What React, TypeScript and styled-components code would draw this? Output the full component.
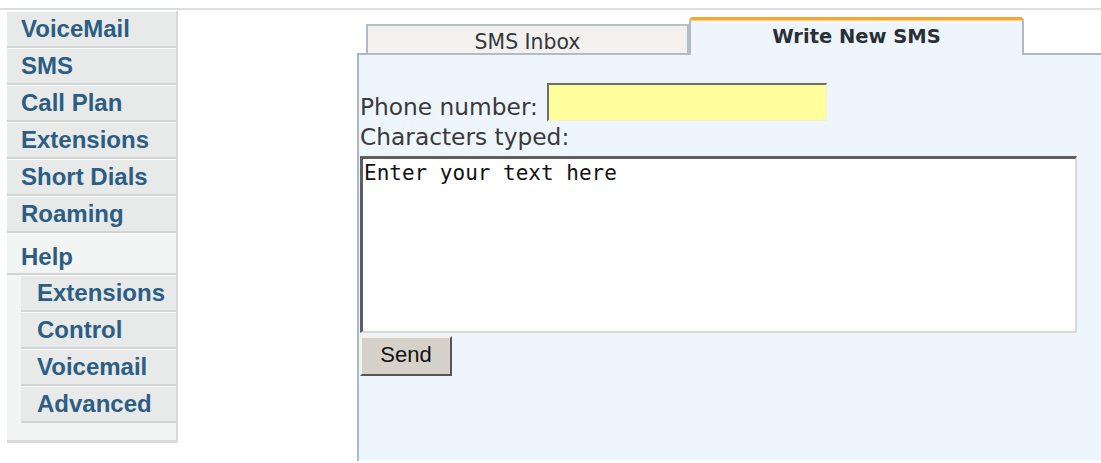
import React from "react";
import styled, { createGlobalStyle } from "styled-components";

const Global = createGlobalStyle`
  html, body { margin: 0; padding: 0; background: #ffffff; }
  body { font-family: "DejaVu Sans", Verdana, sans-serif; }
`;

const Page = styled.div`
  margin-top: 8px;
  border-top: 2px solid #dcdedf;
  display: grid;
  grid-template-columns: 171px 1fr;
  column-gap: 179px;
  padding-left: 7px;
  height: 453px;
  box-sizing: border-box;
`;

const Sidebar = styled.nav`
  margin-top: 1px;
  align-self: start;
  width: 171px;
  background: #f3f5f5;
  border-right: 2px solid #d6d8d8;
  border-bottom: 3px solid #d9dbdb;
  padding-bottom: 17px;
  box-sizing: border-box;
  display: flex;
  flex-direction: column;
`;

const NavItem = styled.div<{ $sub?: boolean; $open?: boolean }>`
  height: ${(p) => (p.$open ? 42 : 37)}px;
  box-sizing: border-box;
  margin-left: ${(p) => (p.$sub ? 14 : 0)}px;
  padding-left: ${(p) => (p.$sub ? 16 : 14)}px;
  padding-top: ${(p) => (p.$open ? 6 : 0)}px;
  background: ${(p) => (p.$open ? "#f3f5f5" : "#e8eaea")};
  border-top: 1px solid #fbfbfb;
  border-bottom: 2px solid #d2d4d4;
  display: flex;
  align-items: center;
  font-family: "Liberation Sans", Arial, sans-serif;
  font-weight: bold;
  font-size: 24px;
  color: #2c5d84;
  white-space: nowrap;
  overflow: hidden;
`;

const Main = styled.section`
  display: flex;
  flex-direction: column;
  margin-top: 9px;
  min-width: 0;
`;

const TabStrip = styled.div`
  display: flex;
  align-items: flex-end;
  padding-left: 9px;
  height: 36px;
  margin-bottom: -2px;
  position: relative;
  z-index: 1;
`;

const Tab = styled.div<{ $active?: boolean }>`
  box-sizing: border-box;
  width: ${(p) => (p.$active ? 335 : 323)}px;
  height: ${(p) => (p.$active ? 38 : 31)}px;
  display: flex;
  justify-content: center;
  align-items: ${(p) => (p.$active ? "flex-start" : "center")};
  padding-top: ${(p) => (p.$active ? 5 : 4)}px;
  color: ${(p) => (p.$active ? "#2b2f36" : "#333840")};
  font-weight: ${(p) => (p.$active ? "bold" : "normal")};
  font-size: ${(p) => (p.$active ? 19.5 : 20.4)}px;
  background: ${(p) => (p.$active ? "#eef5fd" : "#f2f1ed")};
  border: 2px solid #afbcc6;
  border-bottom: ${(p) => (p.$active ? "none" : "2px solid #afbcc6")};
  border-top: ${(p) => (p.$active ? "3px solid #f6a830" : "2px solid #b5c0c8")};
  border-radius: ${(p) => (p.$active ? "4px 4px 0 0" : "0")};
  ${(p) => (p.$active ? "box-shadow: inset 0 1px 0 #fbd27a;" : "")}
`;

const Panel = styled.div`
  flex: 1;
  background: #eef5fd;
  border-left: 2px solid #a9bac6;
  border-top: 2px solid #a9bac6;
  padding: 28px 0 0 1px;
`;

const FieldRow = styled.div`
  display: flex;
  align-items: flex-end;
  gap: 9px;
`;

const Label = styled.label`
  font-size: 23.3px;
  color: #3a3a3a;
  line-height: 30px;
  display: block;
  white-space: nowrap;
`;

const PhoneInput = styled.input`
  width: 280px;
  height: 38px;
  box-sizing: border-box;
  background: #ffff9e;
  border: none;
  border-top: 2px solid #6f6f6f;
  border-left: 2px solid #6f6f6f;
  border-bottom: 1px solid #f5f0d0;
  border-right: 1px solid #f5f0d0;
  margin-bottom: 1px;
  outline: none;
`;

const MessageBox = styled.textarea`
  display: block;
  margin-top: 4px;
  width: 717px;
  height: 177px;
  box-sizing: border-box;
  resize: none;
  background: #ffffff;
  border: none;
  border-top: 3px solid #5e5e5e;
  border-left: 3px solid #5e5e5e;
  border-right: 2px solid #dcd9d0;
  border-bottom: 2px solid #dcd9d0;
  padding: 2px 1px;
  font-family: "DejaVu Sans Mono", monospace;
  font-size: 21px;
  line-height: 24px;
  color: #111;
  outline: none;
`;

const SendButton = styled.button`
  display: block;
  margin-top: 3px;
  width: 92px;
  height: 40px;
  box-sizing: border-box;
  background: #d6d2ca;
  border: 2px solid;
  border-color: #f4f2ee #555 #555 #f4f2ee;
  font-family: "Liberation Sans", Arial, sans-serif;
  font-size: 22px;
  color: #111;
  padding: 0 0 2px;
`;

const mainItems = ["VoiceMail", "SMS", "Call Plan", "Extensions", "Short Dials", "Roaming"];
const helpItems = ["Extensions", "Control", "Voicemail", "Advanced"];

export default function App() {
  return (
    <>
      <Global />
      <Page>
        <Sidebar>
          {mainItems.map((t) => (
            <NavItem key={t}>{t}</NavItem>
          ))}
          <NavItem $open>Help</NavItem>
          {helpItems.map((t) => (
            <NavItem key={t} $sub>
              {t}
            </NavItem>
          ))}
        </Sidebar>
        <Main>
          <TabStrip>
            <Tab>SMS Inbox</Tab>
            <Tab $active>Write New SMS</Tab>
          </TabStrip>
          <Panel>
            <FieldRow>
              <Label htmlFor="phone">Phone number:</Label>
              <PhoneInput id="phone" />
            </FieldRow>
            <Label htmlFor="msg">Characters typed:</Label>
            <MessageBox id="msg" defaultValue="Enter your text here" />
            <SendButton>Send</SendButton>
          </Panel>
        </Main>
      </Page>
    </>
  );
}
